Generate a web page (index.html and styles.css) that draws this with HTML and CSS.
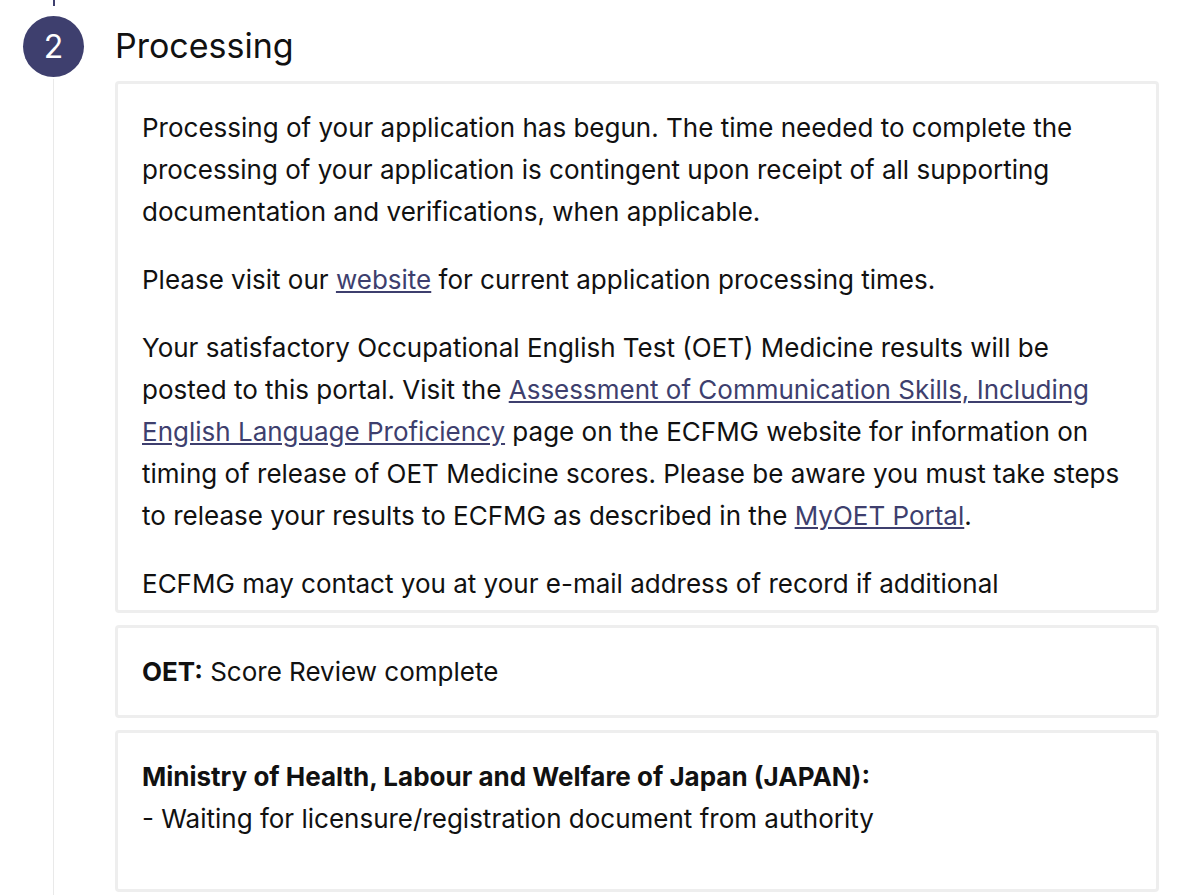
FILE: index.html
```html
<!DOCTYPE html>
<html>
<head>
<meta charset="utf-8">
<link rel="stylesheet" href="styles.css">
</head>
<body>
<div class="timeline">
  <div class="rail">
    <div class="rail-top"></div>
    <div class="step-num">2</div>
    <div class="rail-line"></div>
  </div>
  <div class="content">
    <h2 class="step-title">Processing</h2>
    <div class="card card-scroll">
      <p>Processing of your application has begun. The time needed to complete the processing of your application is contingent upon receipt of all supporting documentation and verifications, when applicable.</p>
      <p>Please visit our <a href="#">website</a> for current application processing times.</p>
      <p>Your satisfactory Occupational English Test (OET) Medicine results will be posted to this portal. Visit the <a href="#">Assessment of Communication Skills, Including English Language Proficiency</a> page on the ECFMG website for information on timing of release of OET Medicine scores. Please be aware you must take steps to release your results to ECFMG as described in the <a href="#">MyOET Portal</a>.</p>
      <p>ECFMG may contact you at your e-mail address of record if additional information is needed to complete the processing of your application.</p>
    </div>
    <div class="card card-status">
      <p><strong>OET:</strong> Score Review complete</p>
    </div>
    <div class="card card-authority">
      <p><strong>Ministry of Health, Labour and Welfare of Japan (JAPAN):</strong><br>- Waiting for licensure/registration document from authority</p>
    </div>
  </div>
</div>
</body>
</html>
```
FILE: styles.css
```css
html, body {
  margin: 0;
  padding: 0;
  background: #ffffff;
}
body {
  font-family: "Inter", "Liberation Sans", sans-serif;
  color: #111111;
  overflow: hidden;
  height: 895px;
}
.timeline {
  display: flex;
  height: 895px;
}
.rail {
  width: 61px;
  margin-left: 23px;
  display: flex;
  flex-direction: column;
  align-items: center;
  flex-shrink: 0;
}
.rail-top {
  width: 2px;
  height: 6px;
  background: #3e3f6e;
}
.step-num {
  width: 61px;
  height: 61px;
  margin-top: 10px;
  border-radius: 50%;
  background: #3e3f6e;
  color: #ffffff;
  font-size: 32px;
  display: flex;
  align-items: center;
  justify-content: center;
  flex-shrink: 0;
}
.rail-line {
  width: 1px;
  flex: 1;
  margin-top: 2px;
  background: #e9e9e9;
}
.content {
  margin-left: 31px;
  width: 1044px;
}
.step-title {
  margin: 26px 0 0 0;
  font-size: 34px;
  font-weight: 400;
  line-height: 40px;
  height: 55px;
}
.card {
  border: 3px solid #eeeeee;
  border-radius: 4px;
  padding: 23px 24px 0 24px;
  margin-bottom: 12px;
  font-size: 26px;
  line-height: 42px;
  box-sizing: border-box;
  overflow: hidden;
}
.card p {
  margin: 0 0 26px 0;
}
.card-scroll {
  height: 532px;
}
.card-status {
  height: 93px;
}
.card-authority {
  height: 162px;
}
a {
  color: #3e3f6e;
  text-decoration: underline;
}
strong {
  font-weight: 700;
}
```
